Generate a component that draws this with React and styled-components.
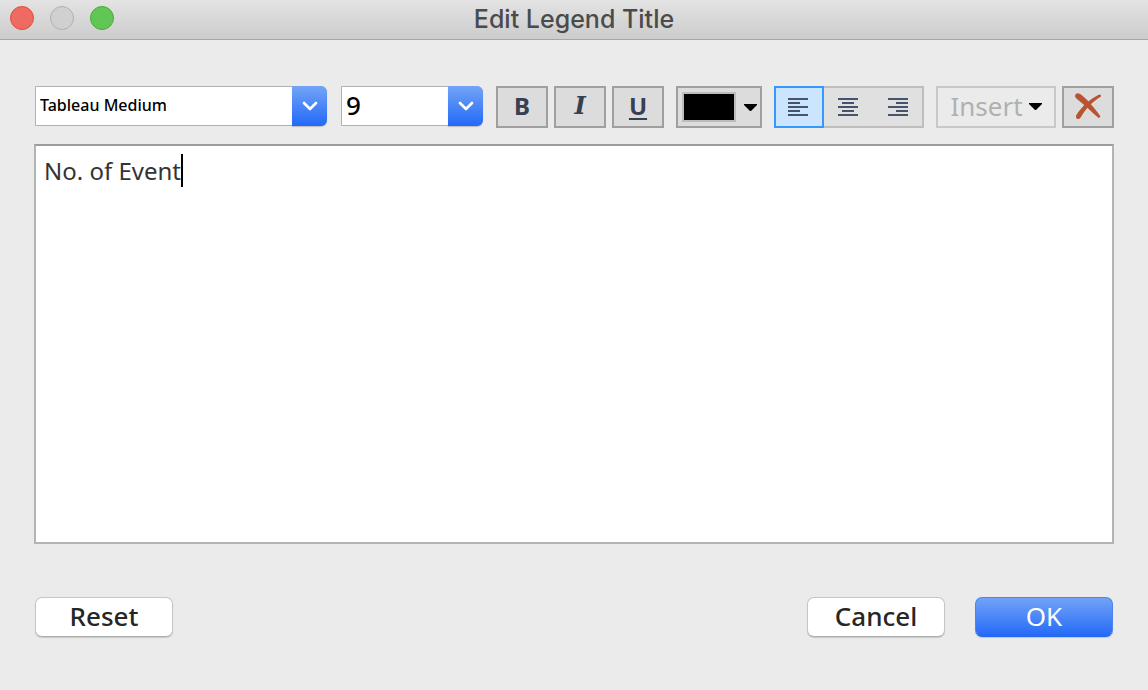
import React, { useState } from "react";
import styled, { createGlobalStyle, css } from "styled-components";

const GlobalStyle = createGlobalStyle`
  *, *::before, *::after { box-sizing: border-box; }
  body {
    margin: 0;
    background: #ebebeb;
    font-family: "Noto Sans", "Open Sans", sans-serif;
  }
  button, select, textarea {
    margin: 0;
    font-family: inherit;
    outline: none;
  }
`;

const Dialog = styled.div`
  display: flex;
  flex-direction: column;
  min-height: 100vh;
  background: #ebebeb;
`;

const TitleBar = styled.header`
  display: grid;
  grid-template-columns: 1fr auto 1fr;
  align-items: center;
  height: 40px;
  padding: 0 10px;
  background: linear-gradient(#e3e3e3, #cccccc);
  border-bottom: 1px solid #a6a6a6;
`;

const WindowControls = styled.div`
  display: flex;
  gap: 16px;
  padding-bottom: 3px;
`;

const WindowControl = styled.button`
  width: 24px;
  height: 24px;
  padding: 0;
  border: 1px solid ${(p) => p.$edge};
  border-radius: 50%;
  background: ${(p) => p.$fill};
`;

const Title = styled.h1`
  margin: 0;
  padding-bottom: 2px;
  font-family: "Inter", "Roboto", sans-serif;
  font-size: 25px;
  font-weight: 500;
  line-height: 36px;
  color: #4b4b4b;
`;

const Body = styled.main`
  flex: 1;
  display: flex;
  flex-direction: column;
  padding: 46px 34px 53px;
`;

const Toolbar = styled.div`
  display: flex;
  align-items: flex-start;
  gap: 12px;
  padding-left: 1px;
  margin-bottom: 16px;
`;

const ToolGroup = styled.div`
  display: flex;
  gap: 6px;
`;

const Combos = styled.div`
  flex: 1;
  display: flex;
  gap: 14px;
  padding-right: 1px;
`;

const Combo = styled.label`
  display: grid;
  grid-template-columns: 1fr 35px;
  height: 40px;
  ${(p) => (p.$grow ? css`flex: 1;` : css`width: 142px;`)}
`;

const ComboSelect = styled.select`
  grid-area: 1 / 1 / 2 / 3;
  min-width: 0;
  height: 40px;
  padding: 0 40px 2px 4px;
  appearance: none;
  border: 1px solid #b1b1b1;
  border-radius: 0 6px 6px 0;
  background: #fff;
  color: #000;
  font-size: ${(p) => (p.$large ? 26 : 16)}px;
  font-weight: 500;
`;

const ComboArrow = styled.span`
  grid-area: 1 / 2 / 2 / 3;
  display: flex;
  align-items: center;
  justify-content: center;
  border-radius: 0 6px 6px 0;
  background: linear-gradient(#73a4f6, #2269f8);
  box-shadow: 0 1px 1px rgba(0, 0, 0, 0.2);
  pointer-events: none;
`;

const ToolButton = styled.button`
  display: flex;
  align-items: center;
  justify-content: center;
  width: 52px;
  height: 42px;
  padding: 0 0 2px;
  border: 2px solid #9f9f9f;
  background: #dcdcdc;
  color: #354052;
  font-size: 24px;
  font-weight: 700;
  line-height: 30px;
`;

const ItalicMark = styled.span`
  font-family: "DejaVu Serif", serif;
  font-style: italic;
`;

const UnderlineMark = styled.span`
  text-decoration: underline;
  text-decoration-thickness: 2px;
  text-underline-offset: 3px;
`;

const ColorButton = styled(ToolButton)`
  justify-content: space-between;
  width: 86px;
  padding: 0 3px 0 4px;
`;

const Swatch = styled.span`
  width: 54px;
  height: 30px;
  border: 2px solid #bcbcbc;
  background: #000;
`;

const AlignGroup = styled.div`
  display: flex;
`;

const AlignButton = styled.button`
  display: flex;
  align-items: center;
  justify-content: center;
  width: 50px;
  height: 42px;
  padding: 0;
  border: 2px solid #bebebe;
  border-left-width: 0;
  background: #e0e0e0;

  &:not(:last-child) {
    padding-right: 2px;
    border-right-width: 0;
  }
  &[aria-pressed="true"] {
    border: 2px solid #3399ff;
    background: #cce5ff;
  }
`;

const InsertButton = styled(ToolButton)`
  gap: 6px;
  width: 120px;
  border-color: #c8c8c8;
  background: #ebebeb;
  color: #b0b0b0;
  font-size: 26px;
  font-weight: 400;
`;

const Editor = styled.label`
  flex: 1;
  display: flex;
  align-items: flex-start;
  min-height: 200px;
  padding: 8px;
  border: 2px solid #b4b4b4;
  border-top-color: #9c9c9c;
  background: #fff;
  cursor: text;
`;

const EditorText = styled.textarea`
  field-sizing: content;
  max-width: 100%;
  padding: 0;
  border: 0;
  background: transparent;
  resize: none;
  overflow: hidden;
  color: #333;
  caret-color: transparent;
  font-size: 24px;
  font-weight: 400;
  line-height: 34px;
`;

const Caret = styled.span`
  width: 2px;
  height: 33px;
  background: #000;
`;

const Footer = styled.footer`
  display: flex;
  justify-content: space-between;
  padding: 53px 1px 0;
`;

const FooterGroup = styled.div`
  display: flex;
  gap: 30px;
`;

const PushButton = styled.button`
  width: 138px;
  height: 40px;
  padding: 0 0 2px;
  border: 1px solid ${(p) => (p.$primary ? "#4a86ee" : "#c6c6c6")};
  border-bottom-color: ${(p) => (p.$primary ? "#2268f0" : "#b0b0b0")};
  border-radius: 7px;
  background: ${(p) => (p.$primary ? "linear-gradient(#73a4f6, #2269f8)" : "#fff")};
  background-origin: border-box;
  box-shadow: 0 1px 1px rgba(0, 0, 0, 0.15);
  color: ${(p) => (p.$primary ? "#fff" : "#262626")};
  font-size: 26px;
  font-weight: ${(p) => (p.$primary ? 400 : 500)};
  line-height: 36px;
`;

const Chevron = () => (
  <svg width="16" height="10" viewBox="0 0 16 10" fill="none" aria-hidden="true">
    <path d="M2 2 8 8 14 2" stroke="#fff" strokeWidth="2.7" strokeLinecap="round" strokeLinejoin="round" />
  </svg>
);

const DropArrow = () => (
  <svg width="13" height="7" viewBox="0 0 13 7" aria-hidden="true">
    <path d="M0 0H13V1L7 7H6L0 1Z" fill="#000" />
  </svg>
);

const shortLineStart = { left: 0, center: 4, right: 8 };

const AlignIcon = ({ side }) => (
  <svg width="20" height="18" viewBox="0 0 20 18" fill="#46536a" aria-hidden="true">
    {[0, 8, 16].map((y) => (
      <rect key={y} x="0" y={y} width="20" height="2" />
    ))}
    {[4, 12].map((y) => (
      <rect key={y} x={shortLineStart[side]} y={y} width="12" height="2" />
    ))}
  </svg>
);

const ClearIcon = () => (
  <svg width="28" height="28" viewBox="0 0 28 28" fill="#b85434" aria-hidden="true">
    <path d="M1 4C1 1.4 3.8.4 5.8 1.8C12 6 20 15.4 26.4 24.2L25 26.2C18 20.6 10.6 12.6 2.4 6.4Q1 5.4 1 4Z" />
    <path d="M27 3.2 25.2 2.4C15.6 7.2 7.2 15 2.4 23C1.2 25.4 2.6 27.4 4.8 27C6.2 26.8 6.8 25.4 7.6 24.1C11.8 16.8 18.4 10 27 4.6Z" />
  </svg>
);

export default function App() {
  const [text, setText] = useState("No. of Event");
  const [align, setAlign] = useState("left");

  return (
    <>
      <GlobalStyle />
      <Dialog role="dialog" aria-labelledby="dialog-title">
        <TitleBar>
          <WindowControls>
            <WindowControl aria-label="Close" $fill="#ed6b60" $edge="#e24b41" />
            <WindowControl aria-label="Minimize" $fill="#d0d0d0" $edge="#b0b0b0" disabled />
            <WindowControl aria-label="Zoom" $fill="#62c655" $edge="#4aaa3b" />
          </WindowControls>
          <Title id="dialog-title">Edit Legend Title</Title>
        </TitleBar>
        <Body>
          <Toolbar role="toolbar" aria-label="Formatting">
            <Combos>
              <Combo $grow>
                <ComboSelect aria-label="Font">
                  <option>Tableau Medium</option>
                </ComboSelect>
                <ComboArrow><Chevron /></ComboArrow>
              </Combo>
              <Combo>
                <ComboSelect aria-label="Font size" $large>
                  <option>9</option>
                </ComboSelect>
                <ComboArrow><Chevron /></ComboArrow>
              </Combo>
            </Combos>
            <ToolGroup>
              <ToolButton aria-label="Bold">B</ToolButton>
              <ToolButton aria-label="Italic"><ItalicMark>I</ItalicMark></ToolButton>
              <ToolButton aria-label="Underline"><UnderlineMark>U</UnderlineMark></ToolButton>
            </ToolGroup>
            <ColorButton aria-label="Text color">
              <Swatch />
              <DropArrow />
            </ColorButton>
            <AlignGroup role="group" aria-label="Alignment">
              {["left", "center", "right"].map((side) => (
                <AlignButton
                  key={side}
                  aria-label={`Align ${side}`}
                  aria-pressed={align === side}
                  onClick={() => setAlign(side)}
                >
                  <AlignIcon side={side} />
                </AlignButton>
              ))}
            </AlignGroup>
            <ToolGroup>
              <InsertButton disabled>
                Insert
                <DropArrow />
              </InsertButton>
              <ToolButton aria-label="Clear"><ClearIcon /></ToolButton>
            </ToolGroup>
          </Toolbar>
          <Editor>
            <EditorText
              aria-label="Legend title"
              rows={1}
              spellCheck={false}
              value={text}
              onChange={(e) => setText(e.target.value)}
            />
            <Caret />
          </Editor>
          <Footer>
            <PushButton>Reset</PushButton>
            <FooterGroup>
              <PushButton>Cancel</PushButton>
              <PushButton $primary>OK</PushButton>
            </FooterGroup>
          </Footer>
        </Body>
      </Dialog>
    </>
  );
}
